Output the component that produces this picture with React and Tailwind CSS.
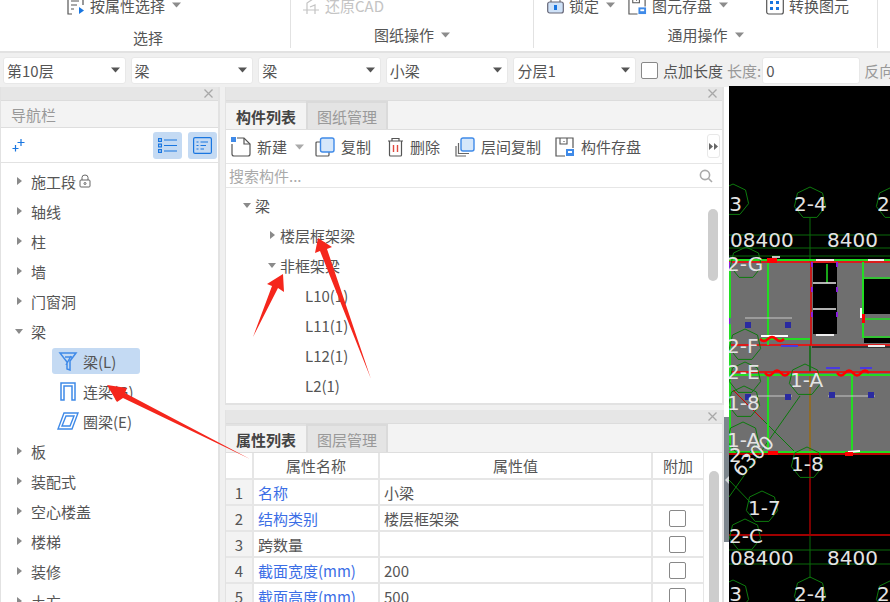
import React from 'react';

const Caret = ({ open, dark }) => (
  <svg width="10" height="10" viewBox="0 0 10 10" className="shrink-0">
    {open
      ? <path d="M1 3 L9 3 L5 8 Z" fill={dark ? '#777' : '#8a8a8a'} />
      : <path d="M3 1 L8 5 L3 9 Z" fill={dark ? '#777' : '#8a8a8a'} />}
  </svg>
);

const SmallDown = ({ color = '#777' }) => (
  <svg width="9" height="6" viewBox="0 0 9 6" className="shrink-0"><path d="M0 0.5 H9 L4.5 5.5 Z" fill={color} /></svg>
);

const CloseX = () => (
  <svg width="9" height="9" viewBox="0 0 9 9"><path d="M0.5 0.5 L8.5 8.5 M8.5 0.5 L0.5 8.5" stroke="#a8a8a8" strokeWidth="1.3" /></svg>
);

const Strip = () => (
  <div className="h-[14px] bg-[#e6e6e6] flex items-center justify-end pr-[5px] border-b border-[#dcdcdc] shrink-0"><CloseX /></div>
);

const Select = ({ label }) => (
  <div className="h-[27px] w-[122.6px] shrink-0 bg-white rounded-[3px] border border-[#e8e8e8] flex items-center justify-between pl-[3px] pr-[5px] text-[#555]">
    <span>{label}</span>
    <SmallDown color="#555" />
  </div>
);

const RibbonItem = ({ icon, label, caret, className, muted }) => (
  <div className={`flex items-center h-[20px] shrink-0 ${muted ? 'text-[#c4c4c4]' : 'text-[#555]'} ${className || ''}`}>
    {icon}
    <span className="ml-[5px]">{label}</span>
    {caret && <span className="ml-[7px]"><SmallDown color="#8c8c8c" /></span>}
  </div>
);

const navItems = ['施工段', '轴线', '柱', '墙', '门窗洞'];
const navItems2 = ['板', '装配式', '空心楼盖', '楼梯', '装修', '土方'];

const NavRow = ({ label, open, children }) => (
  <div className="h-[30px] flex items-center pl-[13px] text-[#555] shrink-0">
    <Caret open={open} />
    <span className="ml-[7px]">{label}</span>
    {children}
  </div>
);

const BeamIcon = () => (
  <svg width="20" height="20" viewBox="0 0 20 20" fill="none" stroke="#3f8ae8" strokeWidth="1.5">
    <path d="M2 2 H18 L12 10 V19 L9 18 V11 Z M7 6 H14 M13 5 L8 14" />
  </svg>
);
const LinkBeamIcon = () => (
  <svg width="18" height="20" viewBox="0 0 18 20" fill="none" stroke="#3f8ae8" strokeWidth="1.5">
    <path d="M2 19 V2 H16 V19 H13 V5 H5 V19 Z" />
  </svg>
);
const RingBeamIcon = () => (
  <svg width="22" height="18" viewBox="0 0 22 18" fill="none" stroke="#3f8ae8" strokeWidth="1.4">
    <path d="M7 1 H21 L15 17 H1 Z M9 4 H17 L13 14 H5 Z" />
  </svg>
);

const SubRow = ({ icon, label, active }) => (
  <div className={`h-[26px] w-[88px] ml-[51px] my-[2px] rounded-[3px] flex items-center text-[#555] shrink-0 whitespace-nowrap ${active ? 'bg-[#c4daf3]' : ''}`}>
    <span className="w-[31px] flex justify-center pl-[1px] shrink-0">{icon}</span>
    <span>{label}</span>
  </div>
);

const ToolBtn = ({ icon, label, caret, className }) => (
  <div className={`flex items-center shrink-0 text-[#555] ${className || ''}`}>
    {icon}
    <span className="ml-[6px]">{label}</span>
    {caret && <span className="ml-[8px]"><SmallDown color="#aaa" /></span>}
  </div>
);

const NewIcon = () => (
  <svg width="20" height="20" viewBox="0 0 20 20" fill="none">
    <path d="M6 1 H13 L19 7 V17 Q19 19 17 19 H3 Q1 19 1 17 V7" stroke="#555" strokeWidth="1.2" />
    <path d="M13 1 V7 H19" stroke="#555" strokeWidth="1.2" />
    <rect x="0" y="0" width="5" height="5" fill="#3f8ae8" />
  </svg>
);
const CopyIcon = () => (
  <svg width="20" height="20" viewBox="0 0 20 20" fill="none">
    <path d="M5 5 H2 Q1 5 1 6 V18 Q1 19 2 19 H13 Q14 19 14 18 V15" stroke="#555" strokeWidth="1.2" />
    <rect x="5.5" y="1" width="13.5" height="14" rx="2" fill="#d6e7fa" stroke="#3f8ae8" strokeWidth="1.4" />
  </svg>
);
const TrashIcon = () => (
  <svg width="17" height="20" viewBox="0 0 17 20" fill="none" stroke="#555" strokeWidth="1.2">
    <path d="M1 4 H16 M5 4 V1.5 H12 V4 M2.5 4 V18 Q2.5 19 3.5 19 H13.5 Q14.5 19 14.5 18 V4" />
    <path d="M6.5 8 V15 M10.5 8 V15" stroke="#e04a3f" strokeWidth="1.4" />
  </svg>
);
const FloorCopyIcon = () => (
  <svg width="20" height="20" viewBox="0 0 20 20" fill="none">
    <path d="M1 9 V19 H11 M3.5 6 V16.5 H14" stroke="#666" strokeWidth="1.2" />
    <rect x="6" y="1" width="13" height="13" rx="2" fill="#d6e7fa" stroke="#3f8ae8" strokeWidth="1.4" />
  </svg>
);
const SaveIcon = ({ size = 20 }) => (
  <svg width={size} height={size} viewBox="0 0 20 20" fill="none" className="shrink-0">
    <path d="M10 19 H1 V1 H18 V11" stroke="#555" strokeWidth="1.2" />
    <path d="M5 1 V7 H12 V1 M9 4 V5" stroke="#555" strokeWidth="1.1" />
    <rect x="11" y="12" width="8" height="7" fill="#3f8ae8" />
    <rect x="13" y="14" width="4" height="2" fill="#fff" />
  </svg>
);

const rows = [
  { n: 1, name: '名称', value: '小梁', blue: true },
  { n: 2, name: '结构类别', value: '楼层框架梁', blue: true, check: true },
  { n: 3, name: '跨数量', value: '', check: true },
  { n: 4, name: '截面宽度(mm)', value: '200', blue: true, check: true },
  { n: 5, name: '截面高度(mm)', value: '500', blue: true, check: true },
];

const Hex = ({ cx, cy, r = 15 }) => {
  const pts = [0, 1, 2, 3, 4, 5, 6].map(i => {
    const a = (Math.PI * 2 * i) / 7 - Math.PI / 2;
    return `${(cx + r * Math.cos(a)).toFixed(1)},${(cy + r * Math.sin(a)).toFixed(1)}`;
  }).join(' ');
  return <polygon points={pts} fill="none" stroke="#0d7a0d" strokeWidth="1" />;
};

const T = ({ x, y, s = 20, children, rot }) => (
  <text x={x} y={y} fontSize={s} fill="#e4e4e4" fontFamily="DejaVu Sans, sans-serif" transform={rot ? `rotate(${rot} ${x} ${y})` : undefined}>{children}</text>
);

const Seg = ({ x1, y1, x2, y2, c = '#f00', w = 1.5, dash }) => <line x1={x1} y1={y1} x2={x2} y2={y2} stroke={c} strokeWidth={w} strokeDasharray={dash} />;

const Drawing = () => (
  <svg viewBox="729 86 161 516" width="161" height="516" className="block">
    <rect x="729" y="86" width="161" height="516" fill="#000" />
    {/* floor plate */}
    <rect x="729" y="261" width="161" height="192" fill="#6f6f6f" />
    <rect x="813" y="263" width="24" height="71" fill="#000" />
    <rect x="864" y="279" width="26" height="35" fill="#000" />
    <rect x="864" y="338" width="26" height="5" fill="#000" />
    <rect x="812" y="346" width="78" height="2" fill="#333" />

    {/* grid lines */}
    <Seg x1="729" y1="235" x2="890" y2="235" c="#0b6b0b" w="1" />
    <Seg x1="729" y1="248" x2="890" y2="248" c="#0b6b0b" w="1" />
    <Seg x1="729" y1="256" x2="890" y2="256" c="#0b6b0b" w="1" />
    <Seg x1="810" y1="218" x2="810" y2="262" c="#0b6b0b" w="1" />
    <Seg x1="729" y1="550" x2="890" y2="550" c="#0b6b0b" w="1" />
    <Seg x1="729" y1="564" x2="890" y2="564" c="#0b6b0b" w="1" />
    <Seg x1="810" y1="535" x2="810" y2="578" c="#0b6b0b" w="1" />
    <Seg x1="729" y1="535" x2="890" y2="535" c="#a00000" w="2" />
    <Seg x1="810" y1="453" x2="810" y2="535" c="#a00000" w="1.5" />
    <Seg x1="810" y1="375" x2="810" y2="452" c="#9a6a10" w="1.5" />
    <Seg x1="811" y1="262" x2="811" y2="345" c="#e00000" w="1.5" />
    <Seg x1="810" y1="345" x2="810" y2="372" c="#0b6b0b" w="1.5" />

    {/* diagonal axes */}
    <Seg x1="733" y1="390" x2="763" y2="420" c="#d00000" w="1" />
    <Seg x1="763" y1="420" x2="795" y2="452" c="#0b7a0b" w="1" />
    <Seg x1="729" y1="497" x2="800" y2="396" c="#0b7a0b" w="1" />
    <Seg x1="729" y1="480" x2="750" y2="502" c="#0b7a0b" w="1" />

    {/* beams */}
    <Seg x1="729" y1="260" x2="890" y2="260" c="#22dd22" w="2" />
    <Seg x1="729" y1="262" x2="890" y2="262" c="#f00" w="1.5" />
    <Seg x1="729" y1="345" x2="890" y2="345" c="#f00" w="1.5" />
    <Seg x1="761" y1="339" x2="810" y2="339" c="#22dd22" w="2" />
    <Seg x1="729" y1="372" x2="890" y2="372" c="#f00" w="1.5" />
    <Seg x1="729" y1="375" x2="890" y2="375" c="#22dd22" w="2" />
    <Seg x1="729" y1="452" x2="890" y2="452" c="#22dd22" w="2" />
    <Seg x1="729" y1="454" x2="890" y2="454" c="#f00" w="1.5" />
    <Seg x1="730" y1="262" x2="730" y2="450" c="#22dd22" w="2" />
    <Seg x1="768" y1="262" x2="768" y2="345" c="#22dd22" w="2" />
    <Seg x1="768" y1="376" x2="768" y2="450" c="#22dd22" w="2" />
    <Seg x1="852" y1="376" x2="852" y2="450" c="#22dd22" w="2" />
    <Seg x1="863" y1="262" x2="863" y2="338" c="#22dd22" w="2" />
    <Seg x1="863" y1="278" x2="890" y2="278" c="#22dd22" w="1.5" />
    <Seg x1="863" y1="319" x2="890" y2="319" c="#22dd22" w="1.5" />
    <Seg x1="863" y1="337" x2="890" y2="337" c="#22dd22" w="1.5" />
    <Seg x1="827" y1="264" x2="827" y2="283" c="#22dd22" w="1.5" />

    {/* purple walls */}
    <Seg x1="812" y1="262" x2="812" y2="335" c="#8a1ee0" w="2" dash="5 20" />
    <Seg x1="837" y1="262" x2="837" y2="335" c="#8a1ee0" w="2" dash="5 20" />
    <Seg x1="729" y1="262" x2="729" y2="270" c="#8a1ee0" w="3" />
    <Seg x1="729" y1="318" x2="729" y2="324" c="#8a1ee0" w="3" />
    <Seg x1="781" y1="346" x2="798" y2="346" c="#4a3ae0" w="2" />
    <Seg x1="826" y1="368" x2="840" y2="368" c="#4a3ae0" w="2" />
    <Seg x1="860" y1="368" x2="872" y2="368" c="#4a3ae0" w="2" />

    {/* white slabs */}
    <Seg x1="816" y1="260" x2="834" y2="260" c="#eee" w="2" />
    <Seg x1="868" y1="260" x2="884" y2="260" c="#eee" w="2" />
    <Seg x1="813" y1="283" x2="836" y2="283" c="#eee" w="1.5" />
    <Seg x1="813" y1="309" x2="836" y2="309" c="#eee" w="1.5" />
    <Seg x1="816" y1="335" x2="834" y2="335" c="#eee" w="2" />
    <Seg x1="868" y1="346" x2="885" y2="346" c="#eee" w="2" />
    <Seg x1="745" y1="318" x2="792" y2="318" c="#c8c8c8" w="1" />
    <Seg x1="745" y1="396" x2="792" y2="396" c="#c8c8c8" w="1" />
    <Seg x1="828" y1="396" x2="875" y2="396" c="#c8c8c8" w="1" />
    <Seg x1="761" y1="336" x2="788" y2="336" c="#fff" w="2" />
    <Seg x1="772" y1="257" x2="780" y2="257" c="#fff" w="1.5" />
    <Seg x1="861" y1="308" x2="861" y2="318" c="#fff" w="2" />
    <Seg x1="848" y1="452" x2="860" y2="451" c="#fff" w="2" />

    {/* red wavy rebar marks */}
    <path d="M760 339 q4 4 8 0 t8 0 t8 0" fill="none" stroke="#f00" strokeWidth="2.5" />
    <path d="M765 373 q4 5 8 0 t8 0 t8 0" fill="none" stroke="#f00" strokeWidth="2.5" />
    <path d="M837 373 q4 5 8 0 t8 0 t8 0 t8 0" fill="none" stroke="#f00" strokeWidth="2.5" />
    <rect x="767" y="258" width="10" height="5" fill="#f00" />
    <rect x="862" y="314" width="3" height="9" fill="#f00" />
    <rect x="768" y="451" width="10" height="4" fill="#f00" />
    <rect x="845" y="452" width="8" height="4" fill="#f00" />

    {/* columns */}
    {[[748, 325], [788, 325], [748, 397], [788, 397], [832, 395], [871, 395]].map(([x, y]) => (
      <rect key={`${x}${y}`} x={x - 3} y={y - 3} width="6" height="6" fill="#2a2aa0" />
    ))}

    {/* axis bubbles */}
    <Hex cx={810} cy={203} r={16} />
    <Hex cx={733} cy={200} r={16} />
    <Hex cx={892} cy={203} r={16} />
    <Hex cx={746} cy={263} r={16} />
    <Hex cx={745} cy={345} r={16} />
    <Hex cx={745} cy={378} r={16} />
    <Hex cx={805} cy={380} r={16} />
    <Hex cx={744} cy={402} r={16} />
    <Hex cx={743} cy={438} r={16} />
    <Hex cx={807} cy={463} r={16} />
    <Hex cx={762} cy={507} r={16} />
    <Hex cx={745} cy={535} r={16} />
    <Hex cx={810} cy={593} r={16} />
    <Hex cx={733} cy={596} r={16} />
    <Hex cx={892} cy={596} r={16} />

    <T x="794" y="211">2-4</T>
    <T x="722" y="211">-3</T>
    <T x="877" y="211">2</T>
    <T x="730" y="247">08400</T>
    <T x="827" y="247">8400</T>
    <T x="727" y="271">2-G</T>
    <T x="727" y="353">2-F</T>
    <T x="727" y="379">2-E</T>
    <T x="790" y="387">1-A</T>
    <T x="727" y="410">1-8</T>
    <T x="727" y="447">1-A</T>
    <T x="729" y="462">2-</T>
    <T x="741" y="478" s={19} rot={-45}>6300</T>
    <T x="791" y="471">1-8</T>
    <T x="748" y="515">1-7</T>
    <T x="729" y="543">2-C</T>
    <T x="730" y="565">08400</T>
    <T x="827" y="565">8400</T>
    <T x="794" y="601">2-4</T>
    <T x="722" y="601">-3</T>
    <T x="877" y="601">2</T>
  </svg>
);

export default function App() {
  return (
    <div className="relative w-[890px] h-[602px] overflow-hidden bg-[#f0f0f0] text-[15px] leading-none font-['Noto_Sans_CJK_SC','Liberation_Sans',sans-serif]">
      {/* ribbon */}
      <div className="h-[53px] bg-white border-b-2 border-[#e2e2e2] flex">
        <div className="w-[291px] h-[48px] border-r border-[#e2e2e2] flex flex-col shrink-0">
          <div className="h-[15px] flex items-end pl-[66px] overflow-hidden">
            <RibbonItem label="按属性选择" caret icon={
              <svg width="19" height="20" viewBox="0 0 19 20" fill="none" className="shrink-0">
                <path d="M6 19 H2 V1 H17 V10 M5 6 H13 M5 10 H11 M5 14 H8" stroke="#555" strokeWidth="1.2" />
                <path d="M13 12 L18 15.5 L13 19 Z" fill="#1976e0" />
              </svg>
            } />
          </div>
          <div className="pt-[15px] pl-[6px] text-center text-[#555]">选择</div>
        </div>
        <div className="w-[243px] h-[48px] border-r border-[#e2e2e2] flex flex-col shrink-0">
          <div className="h-[15px] flex items-end pl-[11px] overflow-hidden">
            <RibbonItem muted label="还原CAD" icon={
              <svg width="18" height="20" viewBox="0 0 18 20" fill="none" className="shrink-0">
                <path d="M1 15 H17 M5 19 V8 L11 4 M13 19 V10 L8 12" stroke="#c4c4c4" strokeWidth="1.2" />
              </svg>
            } />
          </div>
          <div className="pt-[12px] flex items-center justify-center gap-[7px] text-[#555]">图纸操作<SmallDown color="#8c8c8c" /></div>
        </div>
        <div className="w-[344px] h-[48px] border-r border-[#e2e2e2] flex flex-col shrink-0">
          <div className="h-[15px] flex items-end overflow-hidden pl-[13px]">
            <RibbonItem className="w-[81px]" label="锁定" caret icon={
              <svg width="17" height="20" viewBox="0 0 17 20" fill="none" className="shrink-0">
                <path d="M4 7 V3 Q4 1 8.5 1 Q13 1 13 3 V7" stroke="#777" strokeWidth="1.2" />
                <rect x="0.7" y="7" width="15.6" height="11" rx="2" fill="#cfe2f8" stroke="#667" strokeWidth="1.2" />
                <rect x="7" y="10" width="3" height="5" fill="#1976e0" />
              </svg>
            } />
            <RibbonItem className="w-[138px]" label="图元存盘" caret icon={<SaveIcon size={19} />} />
            <RibbonItem label="转换图元" icon={
              <svg width="18" height="20" viewBox="0 0 18 20" fill="none" className="shrink-0">
                <rect x="0.7" y="1" width="16.6" height="18" rx="2" stroke="#555" strokeWidth="1.2" />
                <rect x="4" y="6" width="3" height="3" fill="#1976e0" />
                <rect x="10" y="6" width="3" height="3" fill="#1976e0" />
                <rect x="4" y="12" width="3" height="3" fill="#1976e0" />
                <rect x="10" y="12" width="3" height="3" fill="#1976e0" />
              </svg>
            } />
          </div>
          <div className="pt-[12px] flex items-center justify-center gap-[7px] text-[#555]">通用操作<SmallDown color="#8c8c8c" /></div>
        </div>
      </div>

      {/* property bar */}
      <div className="h-[34px] flex items-center pl-[3px] gap-[5px] whitespace-nowrap">
        <Select label="第10层" />
        <Select label="梁" />
        <Select label="梁" />
        <Select label="小梁" />
        <Select label="分层1" />
        <div className="w-[17px] h-[17px] bg-white border border-[#888] rounded-[2px] shrink-0" />
        <span className="text-[#555] shrink-0">点加长度</span>
        <span className="text-[#999] ml-[-1px] shrink-0">长度:</span>
        <div className="w-[98px] h-[27px] bg-white rounded-[3px] border border-[#e8e8e8] flex items-center pl-[3px] text-[#555] ml-[-4px] shrink-0">0</div>
        <span className="text-[#999] ml-[-1px] shrink-0">反向</span>
      </div>

      <div className="flex h-[515px]">
        {/* navigator */}
        <div className="w-[220px] shrink-0 bg-white border-l border-r-2 border-[#e2e2e2] flex flex-col overflow-hidden">
          <Strip />
          <div className="h-[27px] bg-[#f3f3f3] border-b border-[#dedede] flex items-center pl-[10px] text-[#999] shrink-0">导航栏</div>
          <div className="h-[35px] border-b border-[#e2e2e2] flex items-center pl-[11px] shrink-0">
            <svg width="13" height="13" viewBox="0 0 13 13" fill="none" stroke="#1976e0" strokeWidth="1.2">
              <path d="M9 0 V7 M5.5 3.5 H12.5 M3.5 6 V12.5 M0.5 9.5 H6.5" />
            </svg>
            <div className="ml-auto mr-[1px] flex gap-[6px]">
              <div className="w-[29px] h-[27px] rounded-[3px] bg-[#c4daf3] flex items-center justify-center">
                <svg width="19" height="15" viewBox="0 0 19 15" fill="none" stroke="#1976e0" strokeWidth="1.2">
                  <rect x="0.6" y="0.6" width="2.8" height="2.8" /><rect x="0.6" y="6.1" width="2.8" height="2.8" /><rect x="0.6" y="11.6" width="2.8" height="2.8" />
                  <path d="M6 2 H19 M6 7.5 H19 M6 13 H19" />
                </svg>
              </div>
              <div className="w-[29px] h-[27px] rounded-[3px] bg-[#c4daf3] flex items-center justify-center">
                <svg width="19" height="17" viewBox="0 0 19 17" fill="none" stroke="#1976e0" strokeWidth="1.2">
                  <rect x="0.6" y="0.6" width="17.8" height="15.8" rx="1.5" />
                  <path d="M3.5 5 H5.5 M7.5 5 H15 M3.5 8.5 H5.5 M7.5 8.5 H13 M3.5 12 H5.5 M7.5 12 H11" />
                </svg>
              </div>
            </div>
          </div>
          <div className="pt-[3px] flex flex-col">
            {navItems.map((t, i) => (
              <NavRow key={t} label={t}>
                {i === 0 && (
                  <svg width="12" height="14" viewBox="0 0 12 14" fill="none" stroke="#666" strokeWidth="1" className="ml-[3px]">
                    <path d="M3 6 V3.5 Q3 1 6 1 Q9 1 9 3.5 V6" /><rect x="1" y="6" width="10" height="7" rx="1" /><circle cx="6" cy="9.5" r="1" />
                  </svg>
                )}
              </NavRow>
            ))}
            <NavRow label="梁" open />
            <SubRow active icon={<BeamIcon />} label="梁(L)" />
            <SubRow icon={<LinkBeamIcon />} label="连梁(G)" />
            <SubRow icon={<RingBeamIcon />} label="圈梁(E)" />
            {navItems2.map(t => <NavRow key={t} label={t} />)}
          </div>
        </div>

        <div className="w-[5px] shrink-0" />

        {/* middle column */}
        <div className="w-[499px] shrink-0 flex flex-col gap-[5px]">
          <div className="h-[318px] bg-white border-l border-r-2 border-b-2 border-[#e2e2e2] flex flex-col shrink-0">
            <Strip />
            <div className="h-[29px] bg-[#f3f3f3] flex items-stretch border-b border-[#dedede] shrink-0">
              <div className="w-[80px] bg-[#f3f3f3] border-t-2 border-[#e2e2e2] flex items-center justify-center font-bold text-[#444]">构件列表</div>
              <div className="w-[82px] bg-[#e4e4e4] border-2 border-b-0 border-[#dadada] flex items-center justify-center text-[#999]">图纸管理</div>
            </div>
            <div className="h-[34px] border-b border-[#e6e6e6] flex items-center pl-[5px] relative shrink-0">
              <ToolBtn className="w-[84px]" icon={<NewIcon />} label="新建" caret />
              <ToolBtn className="w-[72px]" icon={<CopyIcon />} label="复制" />
              <ToolBtn className="w-[68px]" icon={<TrashIcon />} label="删除" />
              <ToolBtn className="w-[100px]" icon={<FloorCopyIcon />} label="层间复制" />
              <ToolBtn icon={<SaveIcon />} label="构件存盘" />
              <div className="absolute right-[2px] top-[4px] w-[13px] h-[24px] bg-white border border-[#e8e8e8] rounded-[3px] flex items-center justify-center">
                <svg width="9" height="7" viewBox="0 0 9 7"><path d="M0 0 L4 3.5 L0 7 Z M5 0 L9 3.5 L5 7 Z" fill="#666" /></svg>
              </div>
            </div>
            <div className="h-[24px] border-b border-[#e6e6e6] flex items-center pl-[3px] pr-[9px] text-[#aaa] justify-between shrink-0">
              <span>搜索构件...</span>
              <svg width="14" height="14" viewBox="0 0 14 14" fill="none" stroke="#aaa" strokeWidth="1.6"><circle cx="6" cy="6" r="4.6" /><path d="M9.5 9.5 L13 13" /></svg>
            </div>
            <div className="flex-1 flex text-[#555] overflow-hidden relative">
              <div className="flex-1 flex flex-col pt-[2px]">
                <div className="h-[30px] flex items-center pl-[16px] shrink-0"><Caret open /><span className="ml-[3px]">梁</span></div>
                <div className="h-[30px] flex items-center pl-[41px] shrink-0"><Caret /><span className="ml-[3px]">楼层框架梁</span></div>
                <div className="h-[30px] flex items-center pl-[41px] shrink-0"><Caret open /><span className="ml-[3px]">非框架梁</span></div>
                {['L10(1)', 'L11(1)', 'L12(1)', 'L2(1)'].map(t => (
                  <div key={t} className="h-[30px] flex items-center pl-[79px] shrink-0">{t}</div>
                ))}
              </div>
              <div className="w-[14px] shrink-0 pt-[21px]">
                <div className="w-[10px] h-[72px] rounded-[5px] bg-[#cdcdcd]" />
              </div>
            </div>
          </div>

          <div className="flex-1 bg-white border-l border-r-2 border-[#e2e2e2] flex flex-col overflow-hidden">
            <Strip />
            <div className="h-[29px] bg-[#f3f3f3] flex items-stretch border-b border-[#dedede] shrink-0">
              <div className="w-[80px] border-t-2 border-[#e2e2e2] flex items-center justify-center font-bold text-[#444]">属性列表</div>
              <div className="w-[82px] bg-[#e4e4e4] border-2 border-b-0 border-[#dadada] flex items-center justify-center text-[#999]">图层管理</div>
            </div>
            <div className="flex flex-1 overflow-hidden">
              <div className="w-[478px] shrink-0 flex flex-col border-r border-[#e6e6e6]">
                <div className="h-[27px] flex items-stretch border-b-2 border-[#e6e6e6] text-[#555] shrink-0">
                  <div className="w-[28px] border-r-2 border-[#e6e6e6] shrink-0" />
                  <div className="w-[126px] border-r-2 border-[#e6e6e6] flex items-center justify-center shrink-0">属性名称</div>
                  <div className="w-[273px] border-r-2 border-[#e6e6e6] flex items-center justify-center shrink-0">属性值</div>
                  <div className="flex-1 flex items-center justify-center">附加</div>
                </div>
                {rows.map(r => (
                  <div key={r.n} className="h-[26px] flex items-stretch border-b-2 border-[#e6e6e6] text-[#555] shrink-0">
                    <div className="w-[28px] bg-[#f3f3f3] border-r-2 border-[#e6e6e6] flex items-center justify-center shrink-0">{r.n}</div>
                    <div className={`w-[126px] border-r-2 border-[#e6e6e6] flex items-center pl-[4px] shrink-0 whitespace-nowrap ${r.blue ? 'text-[#3b6ee6]' : ''}`}>{r.name}</div>
                    <div className="w-[273px] border-r-2 border-[#e6e6e6] flex items-center pl-[4px] shrink-0">{r.value}</div>
                    <div className="flex-1 flex items-center justify-center pr-[2px]">
                      {r.check && <div className="w-[17px] h-[17px] border border-[#888] rounded-[2px] bg-white" />}
                    </div>
                  </div>
                ))}
              </div>
              <div className="flex-1 pl-[5px] pt-[18px]">
                <div className="w-[10px] h-[200px] rounded-[5px] bg-[#cdcdcd]" />
              </div>
            </div>
          </div>
        </div>

        {/* splitter */}
        <div className="w-[5px] shrink-0 bg-white flex flex-col">
          <div className="h-[330px] shrink-0" />
          <div className="h-[125px] bg-[#7d868e] flex items-center justify-center shrink-0">
            <svg width="4" height="8" viewBox="0 0 4 8"><path d="M4 0 L0 4 L4 8 Z" fill="#d5d8db" /></svg>
          </div>
        </div>

        {/* cad canvas */}
        <div className="w-[161px] shrink-0 mt-[-1px]">
          <Drawing />
        </div>
      </div>

      {/* annotation arrows drawn over the screenshot */}
      <svg viewBox="0 0 890 602" width="890" height="602" className="absolute inset-0 pointer-events-none">
        <polygon points="250,459 123,398 117,402 107,385 127,388 125,393" fill="#f5261c" />
        <polygon points="371,379 327,249 332,247 318,238 315,253 320,251" fill="#f5261c" />
        <polygon points="253,337 272,286 267,284 283,274 284,292 278,288" fill="#f5261c" />
      </svg>
    </div>
  );
}
